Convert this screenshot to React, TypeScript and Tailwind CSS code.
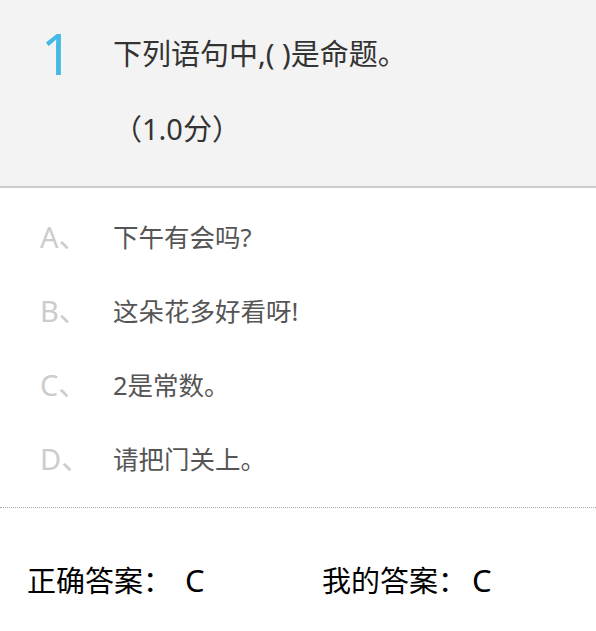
const options = [
  { key: "A", text: "下午有会吗?" },
  { key: "B", text: "这朵花多好看呀!" },
  { key: "C", text: "2是常数。" },
  { key: "D", text: "请把门关上。" },
];

export default function App() {
  return (
    <div className="min-h-[631px] w-[596px] bg-white [font-family:'Noto_Sans','Noto_Sans_CJK_SC',sans-serif]">
      <div className="flex border-b-2 border-[#cccccc] bg-[#f3f3f3] pb-[20px] pl-[41px] pt-[16px]">
        <div className="w-[72px] text-[56px] leading-[75px] text-[#45b9e5]">1</div>
        <div className="text-[#333333]">
          <div className="text-[29px] leading-[75px]">下列语句中,( )是命题。</div>
          <div className="text-[29px] leading-[75px]">（1.0分）</div>
        </div>
      </div>

      <div className="pt-[12px]">
        {options.map((o) => (
          <div key={o.key} className="flex h-[74px] items-center pl-[40px]">
            <span className="w-[73px] text-[29px] text-[#cccccc]">{o.key}、</span>
            <span className="text-[25.5px] text-[#555555]">{o.text}</span>
          </div>
        ))}
      </div>

      <div className="mt-[11px] border-t border-dotted border-[#aaaaaa]" />

      <div className="flex pl-[27px] pt-[50px] text-[29px] leading-[44px] text-black">
        <div className="w-[295px]">
          正确答案：<span className="ml-[13px] text-[31px]">C</span>
        </div>
        <div>
          我的答案：<span className="ml-[5px] text-[31px]">C</span>
        </div>
      </div>
    </div>
  );
}
